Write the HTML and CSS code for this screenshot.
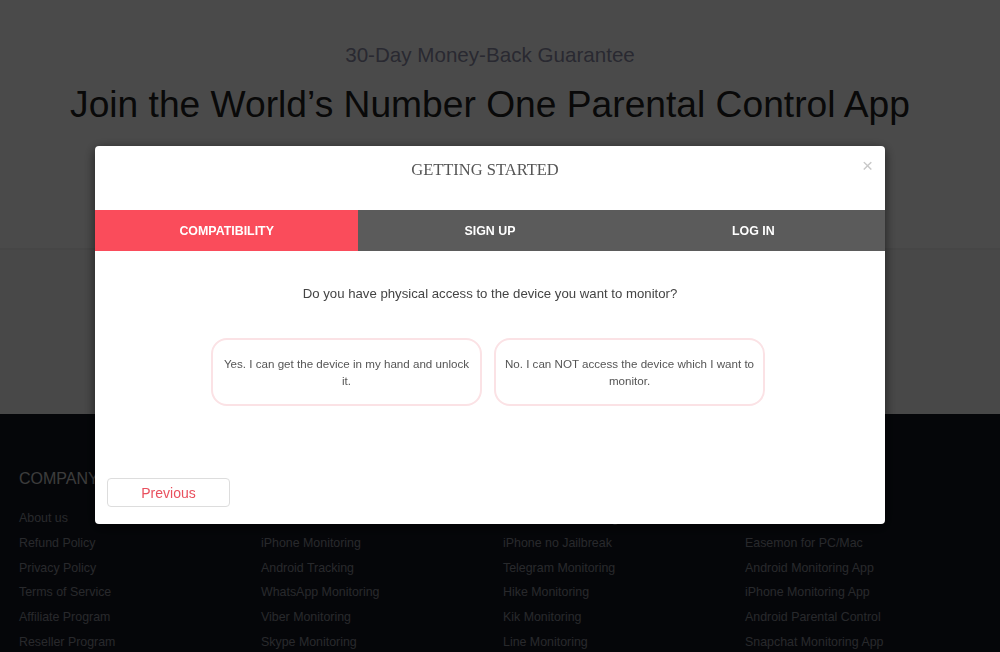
FILE: index.html
```html
<!DOCTYPE html>
<html lang="en">
<head>
<meta charset="UTF-8">
<meta name="viewport" content="width=device-width, initial-scale=1.0">
<title>Getting Started</title>
<link rel="stylesheet" href="styles.css">
</head>
<body>
<div class="page">
    <div class="hero">
        <p class="guarantee">30-Day Money-Back Guarantee</p>
        <h1 class="headline">Join the World’s Number One Parental Control App</h1>
    </div>
    <div class="band"></div>
    <div class="footer">
        <div class="col">
            <h4>Company</h4>
            <a>About us</a>
            <a>Refund Policy</a>
            <a>Privacy Policy</a>
            <a>Terms of Service</a>
            <a>Affiliate Program</a>
            <a>Reseller Program</a>
        </div>
        <div class="col">
            <h4>Monitoring</h4>
            <a>Parental Control</a>
            <a>iPhone Monitoring</a>
            <a>Android Tracking</a>
            <a>WhatsApp Monitoring</a>
            <a>Viber Monitoring</a>
            <a>Skype Monitoring</a>
        </div>
        <div class="col">
            <h4>Features</h4>
            <a>Facebook Monitoring</a>
            <a>iPhone no Jailbreak</a>
            <a>Telegram Monitoring</a>
            <a>Hike Monitoring</a>
            <a>Kik Monitoring</a>
            <a>Line Monitoring</a>
        </div>
        <div class="col">
            <h4>Products</h4>
            <a>Easemon</a>
            <a>Easemon for PC/Mac</a>
            <a>Android Monitoring App</a>
            <a>iPhone Monitoring App</a>
            <a>Android Parental Control</a>
            <a>Snapchat Monitoring App</a>
        </div>
    </div>
</div>

<div class="overlay">
    <div class="modal">
        <div class="modal-head">
            <span class="modal-title">GETTING STARTED</span>
            <span class="close">×</span>
        </div>
        <div class="tabs">
            <div class="tab active">COMPATIBILITY</div>
            <div class="tab">SIGN UP</div>
            <div class="tab">LOG IN</div>
        </div>
        <div class="modal-body">
            <p class="question">Do you have physical access to the device you want to monitor?</p>
            <div class="options">
                <div class="option">Yes. I can get the device in my hand and unlock it.</div>
                <div class="option">No. I can NOT access the device which I want to monitor.</div>
            </div>
            <button class="prev">Previous</button>
        </div>
    </div>
</div>
</body>
</html>
```

FILE: styles.css
```css
    body {
        margin: 0;
        padding: 0;
        font-family: "Liberation Sans", Arial, sans-serif;
        background: #fff;
        overflow: hidden;
    }
    .hero {
        height: 250px;
        padding: 41px 20px 0 0;
        box-sizing: border-box;
        text-align: center;
        background: #fff;
        border-bottom: 2px solid #f0f0f0;
    }
    .guarantee {
        margin: 0;
        font-size: 20.6px;
        line-height: 28px;
        color: #8e8ea8;
    }
    .headline {
        margin: 13px 0 0;
        font-size: 37.2px;
        font-weight: normal;
        line-height: 44px;
        color: #222;
    }
    .band {
        height: 164px;
        background: #f7f7f7;
    }
    .footer {
        background: #121620;
        height: 300px;
        padding: 56px 19px 0;
        display: grid;
        grid-template-columns: repeat(4, 242px);
        box-sizing: border-box;
    }
    .col h4 {
        margin: 0 0 18px;
        font-size: 16px;
        font-weight: normal;
        line-height: 18px;
        text-transform: uppercase;
        color: #cfcfcf;
    }
    .col a {
        display: block;
        font-size: 12.4px;
        line-height: 24.8px;
        color: #8a8d97;
    }
    .overlay {
        position: fixed;
        top: 0;
        left: 0;
        right: 0;
        bottom: 0;
        background: rgba(0, 0, 0, 0.71);
    }
    .modal {
        width: 790px;
        margin: 146px 0 0 95px;
        background: #fff;
        border-radius: 4px;
        box-shadow: 0 3px 12px rgba(0, 0, 0, 0.6);
        position: relative;
    }
    .modal-head {
        height: 64px;
        text-align: center;
        padding: 14px 10px 0 0;
        box-sizing: border-box;
    }
    .modal-title {
        font-family: "Liberation Serif", "Times New Roman", serif;
        font-size: 16.5px;
        line-height: 20px;
        color: #555;
    }
    .close {
        position: absolute;
        right: 12px;
        top: 9px;
        font-size: 19px;
        color: #c8c8c8;
    }
    .tabs {
        display: flex;
        height: 41px;
        background: #5b5b5b;
    }
    .tab {
        flex: 1;
        display: flex;
        align-items: center;
        justify-content: center;
        color: #fff;
        font-size: 12.4px;
        font-weight: bold;
    }
    .tab.active {
        background: #fa4c5b;
    }
    .modal-body {
        padding: 35px 12px 17px;
    }
    .question {
        margin: 0;
        text-align: center;
        font-size: 13.2px;
        line-height: 16px;
        color: #444;
    }
    .options {
        display: flex;
        justify-content: center;
        gap: 12px;
        margin: 36px 0 0 -4px;
    }
    .option {
        width: 271px;
        height: 68px;
        box-sizing: border-box;
        border: 2px solid #fbe2e5;
        border-radius: 16px;
        display: flex;
        align-items: center;
        justify-content: center;
        text-align: center;
        padding: 0 8px;
        font-size: 11.6px;
        line-height: 17px;
        color: #555;
    }
    .prev {
        display: block;
        margin-top: 72px;
        width: 123px;
        height: 29px;
        background: #fff;
        border: 1px solid #ddd;
        border-radius: 4px;
        font-family: "Liberation Sans", Arial, sans-serif;
        font-size: 14px;
        color: #e9505e;
    }
```
